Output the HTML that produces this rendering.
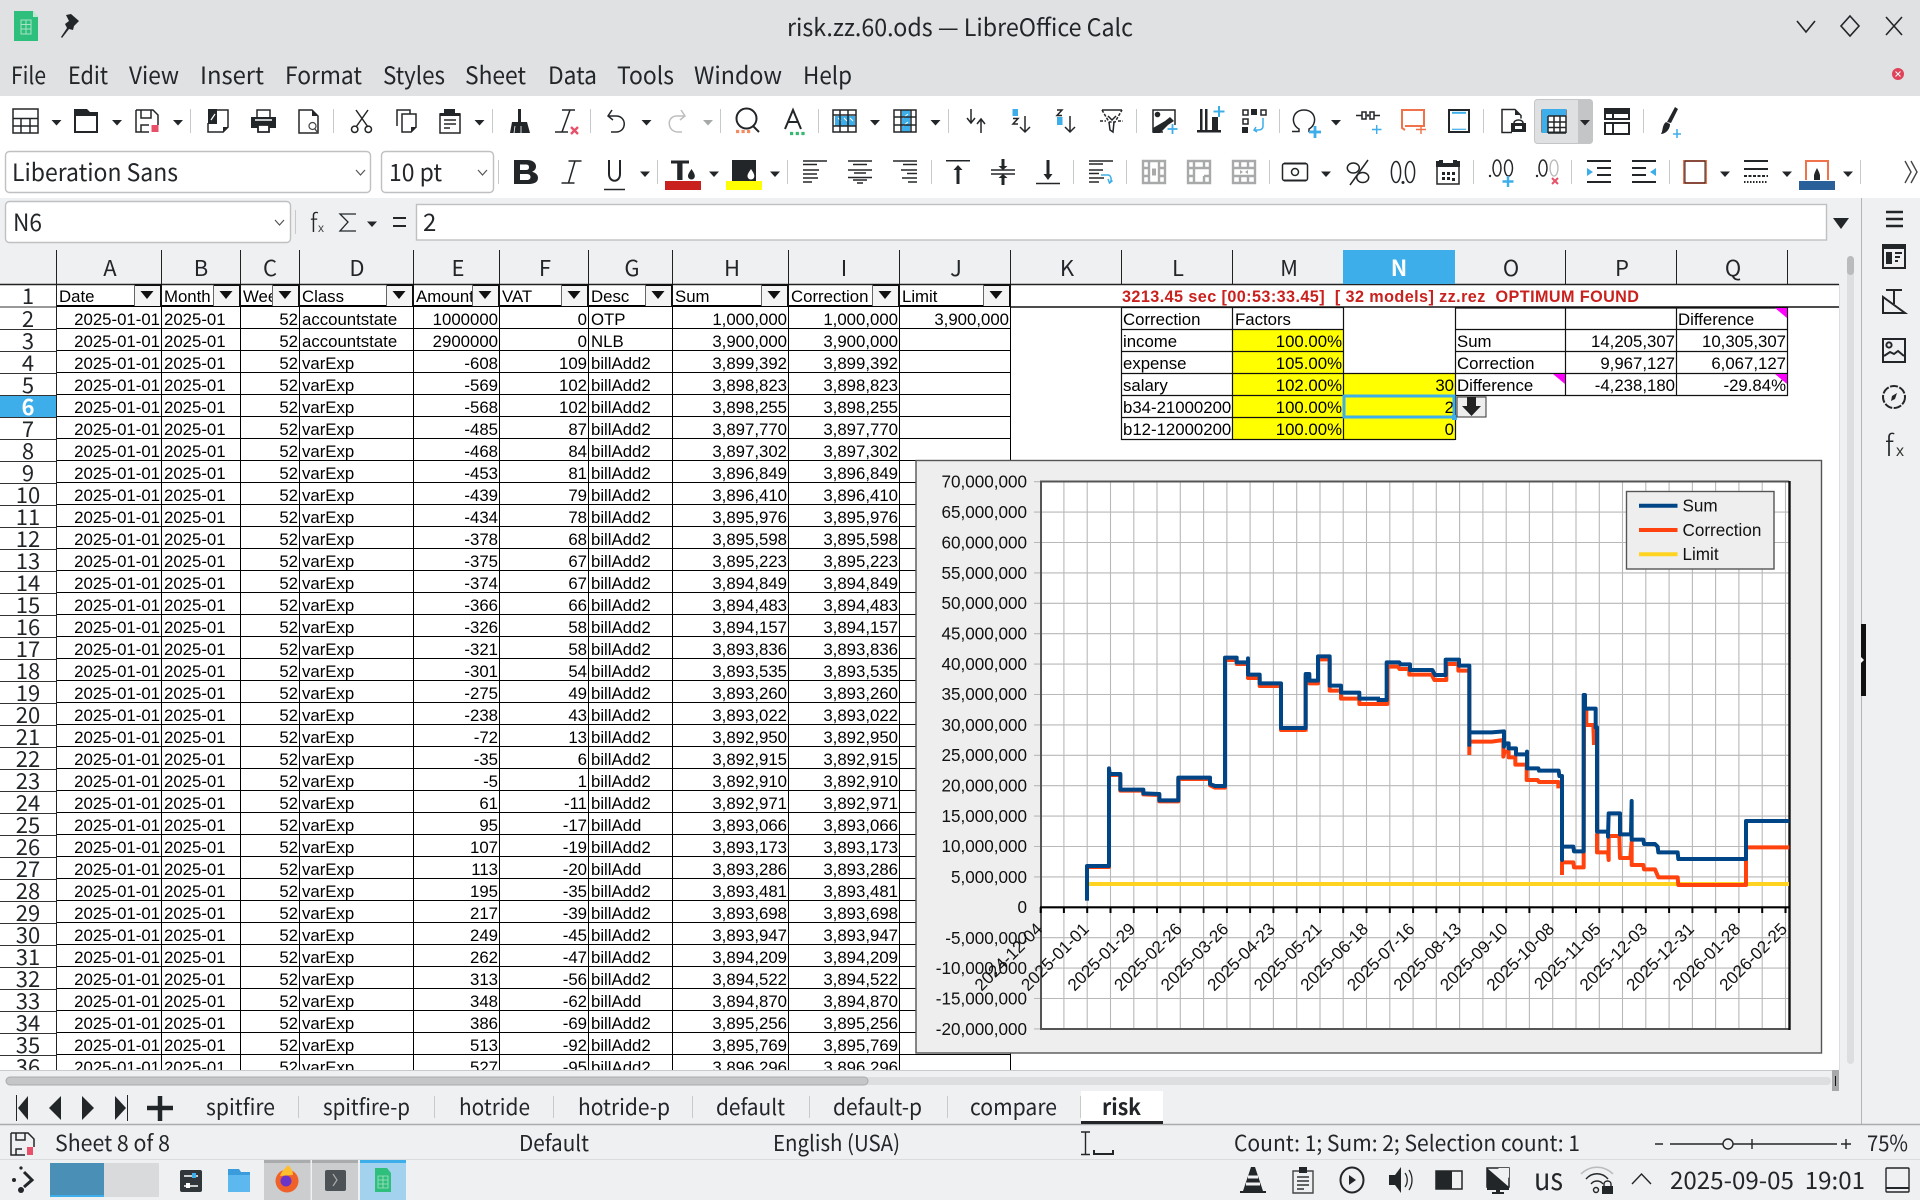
<!DOCTYPE html>
<html><head><meta charset="utf-8"><title>risk.zz.60.ods — LibreOffice Calc</title>
<style>
html,body{margin:0;padding:0;background:#eff0f2}
body{width:1920px;height:1200px;overflow:hidden;position:relative}
.b{position:absolute}
#grid{position:absolute;left:57px;top:284px;width:954px;height:786px;overflow:hidden;background:#fff}
table{border-collapse:separate;border-spacing:0;table-layout:fixed;width:954px;font:16.8px/17px "Liberation Sans",sans-serif;color:#000}
td{box-sizing:border-box;height:22px;padding:4px 1px 0 2px;border-right:1px solid #000;border-bottom:1px solid #000;white-space:nowrap;overflow:hidden}
tr:first-child td{height:23px;border-bottom:2px solid #000}
td:nth-child(1),td:nth-child(3),td:nth-child(5),td:nth-child(6),td:nth-child(8),td:nth-child(9),td:nth-child(10){text-align:right}
tr:first-child td{text-align:left}
svg{position:absolute;left:0;top:0}
.u{font-family:"Noto Sans CJK JP","Liberation Sans",sans-serif;fill:#232629;font-size:24px}
.h{font-family:"Noto Sans CJK JP","Liberation Sans",sans-serif;fill:#232629;font-size:22px;text-anchor:middle}
.c{font-family:"Liberation Sans",sans-serif;font-size:16.8px;fill:#000}
.e{text-anchor:end}
.t{font-family:"Liberation Sans",sans-serif;font-size:17.1px;fill:#111}
.s{fill:none;stroke:#232629;stroke-width:2}
.n{fill:none;stroke:#232629;stroke-width:1.5}
.f{fill:#232629}
.g{fill:none;stroke:#a8a9aa;stroke-width:2.4}
.sp{stroke:#c8c9ca;stroke-width:1}
</style></head><body>
<div class="b" style="left:0;top:0;width:1920px;height:96px;background:#dfe1e3"></div>
<div class="b" style="left:0;top:96px;width:1920px;height:102px;background:#fff"></div>
<div class="b" style="left:0;top:284px;width:1839px;height:786px;background:#fff"></div>
<div id="grid"><table>
<colgroup><col style="width:105px"><col style="width:79px"><col style="width:59px"><col style="width:114px"><col style="width:86px"><col style="width:89px"><col style="width:84px"><col style="width:116px"><col style="width:111px"><col style="width:111px"></colgroup>
<tr><td>Date<td>Month<td>Week<td>Class<td>Amount<td>VAT<td>Desc<td>Sum<td>Correction<td>Limit</tr>
<tr><td>2025-01-01<td>2025-01<td>52<td>accountstate<td>1000000<td>0<td>OTP<td>1,000,000<td>1,000,000<td>3,900,000</tr>
<tr><td>2025-01-01<td>2025-01<td>52<td>accountstate<td>2900000<td>0<td>NLB<td>3,900,000<td>3,900,000<td></tr>
<tr><td>2025-01-01<td>2025-01<td>52<td>varExp<td>-608<td>109<td>billAdd2<td>3,899,392<td>3,899,392<td></tr>
<tr><td>2025-01-01<td>2025-01<td>52<td>varExp<td>-569<td>102<td>billAdd2<td>3,898,823<td>3,898,823<td></tr>
<tr><td>2025-01-01<td>2025-01<td>52<td>varExp<td>-568<td>102<td>billAdd2<td>3,898,255<td>3,898,255<td></tr>
<tr><td>2025-01-01<td>2025-01<td>52<td>varExp<td>-485<td>87<td>billAdd2<td>3,897,770<td>3,897,770<td></tr>
<tr><td>2025-01-01<td>2025-01<td>52<td>varExp<td>-468<td>84<td>billAdd2<td>3,897,302<td>3,897,302<td></tr>
<tr><td>2025-01-01<td>2025-01<td>52<td>varExp<td>-453<td>81<td>billAdd2<td>3,896,849<td>3,896,849<td></tr>
<tr><td>2025-01-01<td>2025-01<td>52<td>varExp<td>-439<td>79<td>billAdd2<td>3,896,410<td>3,896,410<td></tr>
<tr><td>2025-01-01<td>2025-01<td>52<td>varExp<td>-434<td>78<td>billAdd2<td>3,895,976<td>3,895,976<td></tr>
<tr><td>2025-01-01<td>2025-01<td>52<td>varExp<td>-378<td>68<td>billAdd2<td>3,895,598<td>3,895,598<td></tr>
<tr><td>2025-01-01<td>2025-01<td>52<td>varExp<td>-375<td>67<td>billAdd2<td>3,895,223<td>3,895,223<td></tr>
<tr><td>2025-01-01<td>2025-01<td>52<td>varExp<td>-374<td>67<td>billAdd2<td>3,894,849<td>3,894,849<td></tr>
<tr><td>2025-01-01<td>2025-01<td>52<td>varExp<td>-366<td>66<td>billAdd2<td>3,894,483<td>3,894,483<td></tr>
<tr><td>2025-01-01<td>2025-01<td>52<td>varExp<td>-326<td>58<td>billAdd2<td>3,894,157<td>3,894,157<td></tr>
<tr><td>2025-01-01<td>2025-01<td>52<td>varExp<td>-321<td>58<td>billAdd2<td>3,893,836<td>3,893,836<td></tr>
<tr><td>2025-01-01<td>2025-01<td>52<td>varExp<td>-301<td>54<td>billAdd2<td>3,893,535<td>3,893,535<td></tr>
<tr><td>2025-01-01<td>2025-01<td>52<td>varExp<td>-275<td>49<td>billAdd2<td>3,893,260<td>3,893,260<td></tr>
<tr><td>2025-01-01<td>2025-01<td>52<td>varExp<td>-238<td>43<td>billAdd2<td>3,893,022<td>3,893,022<td></tr>
<tr><td>2025-01-01<td>2025-01<td>52<td>varExp<td>-72<td>13<td>billAdd2<td>3,892,950<td>3,892,950<td></tr>
<tr><td>2025-01-01<td>2025-01<td>52<td>varExp<td>-35<td>6<td>billAdd2<td>3,892,915<td>3,892,915<td></tr>
<tr><td>2025-01-01<td>2025-01<td>52<td>varExp<td>-5<td>1<td>billAdd2<td>3,892,910<td>3,892,910<td></tr>
<tr><td>2025-01-01<td>2025-01<td>52<td>varExp<td>61<td>-11<td>billAdd2<td>3,892,971<td>3,892,971<td></tr>
<tr><td>2025-01-01<td>2025-01<td>52<td>varExp<td>95<td>-17<td>billAdd<td>3,893,066<td>3,893,066<td></tr>
<tr><td>2025-01-01<td>2025-01<td>52<td>varExp<td>107<td>-19<td>billAdd2<td>3,893,173<td>3,893,173<td></tr>
<tr><td>2025-01-01<td>2025-01<td>52<td>varExp<td>113<td>-20<td>billAdd<td>3,893,286<td>3,893,286<td></tr>
<tr><td>2025-01-01<td>2025-01<td>52<td>varExp<td>195<td>-35<td>billAdd2<td>3,893,481<td>3,893,481<td></tr>
<tr><td>2025-01-01<td>2025-01<td>52<td>varExp<td>217<td>-39<td>billAdd2<td>3,893,698<td>3,893,698<td></tr>
<tr><td>2025-01-01<td>2025-01<td>52<td>varExp<td>249<td>-45<td>billAdd2<td>3,893,947<td>3,893,947<td></tr>
<tr><td>2025-01-01<td>2025-01<td>52<td>varExp<td>262<td>-47<td>billAdd2<td>3,894,209<td>3,894,209<td></tr>
<tr><td>2025-01-01<td>2025-01<td>52<td>varExp<td>313<td>-56<td>billAdd2<td>3,894,522<td>3,894,522<td></tr>
<tr><td>2025-01-01<td>2025-01<td>52<td>varExp<td>348<td>-62<td>billAdd<td>3,894,870<td>3,894,870<td></tr>
<tr><td>2025-01-01<td>2025-01<td>52<td>varExp<td>386<td>-69<td>billAdd2<td>3,895,256<td>3,895,256<td></tr>
<tr><td>2025-01-01<td>2025-01<td>52<td>varExp<td>513<td>-92<td>billAdd2<td>3,895,769<td>3,895,769<td></tr>
<tr><td>2025-01-01<td>2025-01<td>52<td>varExp<td>527<td>-95<td>billAdd2<td>3,896,296<td>3,896,296<td></tr>
</table></div>

<svg width="1920" height="1200" viewBox="0 0 1920 1200" xmlns="http://www.w3.org/2000/svg">
<defs>
<path id="arr" d="M-5-2.500h10l-5 5.500z" fill="#232629"/>
<path id="flt" d="M-6.500-4h13l-6.500 8z" fill="#111"/>
</defs>

<!-- title bar -->
<path d="M14 11h19l5 6v24H14z" fill="#2fbf7c"/><path d="M33 11l5 6h-5z" fill="#bfe9d3"/>
<path d="M21 20h10v14H21zM21 24.500h10M21 29h10M26 20v14" fill="none" stroke="#a7e3c4" stroke-width="1"/>
<path d="M66 15l5-1 8 7-5 5-1 4-4-1-7 9-1-1 6-9-2-4 4-3z" fill="#232629"/>
<text class="u" x="787" y="36" textLength="346" lengthAdjust="spacingAndGlyphs">risk.zz.60.ods — LibreOffice Calc</text>
<path d="M1797 21l9 11 9-11M1850 16l9 10-9 10-9-10zM1886 17l16 18M1902 17l-16 18" fill="none" stroke="#232629" stroke-width="1.600"/>

<!-- menu -->
<g class="m">
<text class="u" x="11" y="84" textLength="35" lengthAdjust="spacingAndGlyphs">File</text>
<text class="u" x="68" y="84" textLength="40" lengthAdjust="spacingAndGlyphs">Edit</text>
<text class="u" x="129" y="84" textLength="50" lengthAdjust="spacingAndGlyphs">View</text>
<text class="u" x="200" y="84" textLength="64" lengthAdjust="spacingAndGlyphs">Insert</text>
<text class="u" x="285" y="84" textLength="77" lengthAdjust="spacingAndGlyphs">Format</text>
<text class="u" x="383" y="84" textLength="62" lengthAdjust="spacingAndGlyphs">Styles</text>
<text class="u" x="465" y="84" textLength="61" lengthAdjust="spacingAndGlyphs">Sheet</text>
<text class="u" x="548" y="84" textLength="49" lengthAdjust="spacingAndGlyphs">Data</text>
<text class="u" x="617" y="84" textLength="57" lengthAdjust="spacingAndGlyphs">Tools</text>
<text class="u" x="694" y="84" textLength="88" lengthAdjust="spacingAndGlyphs">Window</text>
<text class="u" x="803" y="84" textLength="49" lengthAdjust="spacingAndGlyphs">Help</text>
</g>
<circle cx="1898" cy="74" r="6" fill="#e0425a"/><path d="M1895.500 71.500l5 5M1900.500 71.500l-5 5" stroke="#fff" stroke-width="1"/>

<!-- active toolbar button -->
<rect x="1534.500" y="99.500" width="58" height="44" rx="3" fill="#dfe0e1" stroke="#c4c5c6"/>
<rect x="1578" y="100" width="14" height="43" fill="#c4c5c6"/>

<!-- separators toolbar 1 -->
<path class="sp" d="M190.500 109v24M333.500 109v24M492.500 109v24M590.500 109v24M720.500 109v24M818.500 109v24M948.500 109v24M1136.500 109v24M1279.500 109v24M1483.500 109v24M1643.500 109v24"/>
<!-- separators toolbar 2 -->
<path class="sp" d="M498.500 160v24M657.500 160v24M787.500 160v24M931.500 160v24M1073.500 160v24M1126.500 160v24M1269.500 160v24M1473.500 160v24M1571.500 160v24M1669.500 160v24M1860.500 160v24"/>

<!-- toolbar 1 icons -->
<path class="n" stroke-width="1.800" d="M13 109h25v24H13zM13 118.500h25M13 126h25M21 118v15M30 118v15"/><use href="#arr" x="56.500" y="122.500"/>
<path class="f" d="M74 109h13l3 3h8v4H74z"/><path class="s" d="M75 115v17h22V115"/><use href="#arr" x="117" y="122.500"/>
<path class="n" stroke-width="1.700" d="M136 110h17l5 5v10M136 110v22h13M141 110v8h10v-8M141 132v-7h8"/><rect x="151.500" y="125" width="7" height="7" fill="#e8506a"/><use href="#arr" x="178" y="122.500"/>
<path class="n" stroke-width="1.700" d="M217 110h11v17l-5 5h-15v-9"/><path class="f" d="M229 127l-6 6v-6zM208 109h9v15h-9z"/><path d="M211 120l4-6" stroke="#fff" stroke-width="1.200"/>
<path class="n" stroke-width="1.800" d="M257 117v-7h13v7"/><path class="f" d="M251 117h25v11h-25z"/><path d="M255 120h17" stroke="#fff" stroke-width="1.400"/><path d="M258 125h11v7h-11z" fill="#fff" stroke="#232629" stroke-width="1.800"/>
<path class="n" stroke-width="1.500" d="M299 133v-23h13l6 6v17z"/><path class="f" d="M312 110l6 6h-6z"/><circle cx="312.500" cy="126" r="3.500" fill="#fff" stroke="#444" stroke-width="1.200"/><path d="M315 129l3 4" stroke="#444" stroke-width="1.400"/>
<path class="n" stroke-width="1.800" d="M356 110l12 17M368 110l-12 17"/><circle cx="354.700" cy="129.300" r="3.200" class="n"/><circle cx="368.300" cy="129.300" r="3.200" class="n"/>
<path class="n" stroke-width="1.700" d="M397 126v-16h13v4M402 114h14v13l-5 5h-9z"/><path class="f" d="M417 127l-6 6v-6z"/>
<path class="n" stroke-width="1.700" d="M440 114h20v19h-20z"/><path class="f" d="M444 109h11v4h5v3h-20v-3h4z"/><path class="n" stroke-width="1.300" d="M444 120h12M444 124h12M444 128h6"/><use href="#arr" x="479.500" y="122.500"/>
<path class="f" d="M518 109h3v13h-3zM512 122h15l3 11h-20z"/><path d="M515 126l-1 7M521 126v7" stroke="#fff" stroke-width=".8"/>
<path class="n" d="M562 110h13M570 110l-8 22M555 132h13"/><path d="M571 127l7 7M578 127l-7 7" stroke="#e8506a" stroke-width="2.400"/>
<path class="n" stroke="#333" d="M612 110l-4 6 5 4M608 116h8c11 0 11 16 0 16h-5"/><use href="#arr" x="646.500" y="122.500"/>
<path fill="none" stroke="#bdbebf" stroke-width="1.500" d="M681 110l4 6-5 4M685 116h-8c-11 0-10 16 1 16h4"/><use href="#arr" x="708" y="122.500" opacity=".4"/>
<circle cx="746.500" cy="118.500" r="10" class="s"/><path class="s" d="M753 126l6 6"/><path d="M736 131.500h16" stroke="#f5895f" stroke-width="3.200" stroke-dasharray="3.200 2.300"/>
<path class="s" d="M785 129l8-19 8 19M787.500 122h11"/><path d="M790 133.500h15" stroke="#35b86f" stroke-width="3.200" stroke-dasharray="3.200 2.500"/>
<rect x="835" y="116" width="20" height="10" fill="#3daee9"/><path d="M838 118l3 3M844 118l3 3M850 118l3 3" stroke="#fff"/><path class="n" stroke-width="2" d="M833 110h23v22h-23zM833 115h23M833 126h23M840 110v22M848 110v22"/><use href="#arr" x="875" y="122.500"/>
<rect x="902" y="110" width="8" height="22" fill="#3daee9"/><path d="M903 118l5-4M903 126l5-4" stroke="#fff"/><path class="n" stroke-width="2" d="M894 110h22v22h-22zM894 117h22M894 125h22M901 110v22M911 110v22"/><use href="#arr" x="935.500" y="122.500"/>
<path class="n" stroke-width="1.500" d="M971 109v14M967 118l4 5 4-5M981 133v-14M977 124l4-5 4 5"/>
<rect x="1012.500" y="109" width="5.500" height="7" fill="#3daee9"/><path class="n" stroke-width="1.800" d="M1013 118.500h5l-5 5.500h5"/><path class="n" stroke-width="1.500" d="M1025 116v16M1020 127l5 5 5-5"/>
<path class="n" stroke-width="1.800" d="M1057 110h5l-5 5.500h5"/><rect x="1057" y="117" width="5.500" height="8" fill="#3daee9"/><path class="n" stroke-width="1.500" d="M1070 116v16M1065 127l5 5 5-5"/>
<path class="n" stroke-width="2" d="M1102 110h20"/><path class="n" stroke-width="1.500" stroke-dasharray="3 1.500" d="M1102 110l7 12h6l7-12M1100 121h6M1118 121h5"/><path class="n" stroke-width="1.500" d="M1108 116l4 4 4-4M1109 122l1 8 3 2 1-10"/>
<path class="n" stroke-width="2" d="M1175 125V110h-22v22h10"/><path class="f" d="M1153 133v-5l12-7 5-4 4 4-6 4-8 8z"/><circle cx="1157.500" cy="114.500" r="2.800" class="f"/><path d="M1172.500 124v10M1167.500 129h10" stroke="#3daee9" stroke-width="1.800"/>
<path class="f" d="M1200 109h2.500v22H1200zM1205 109h2.500v22H1205zM1212 117h6v14h-6zM1197 130h24v2.500h-24z"/><path d="M1219 106v11M1213.500 111.500h11" stroke="#3daee9" stroke-width="2"/>
<path class="n" stroke-width="1.800" d="M1243 110h5v5h-5zM1261 110h5v5h-5zM1243 119h5v5h-5z"/><path class="f" d="M1251 109h6v6h-6zM1242 127h6v6h-6z"/><path d="M1263 118v8c0 3-2 4-5 4h-4M1256 127l-2 3 3 2" fill="none" stroke="#3daee9" stroke-width="1.500"/>
<path class="n" stroke-width="2.500" d="M1292 131.500h7v-2.500c-9-5-7-19 5-19s14 14 5 19v2.500h7"/><path d="M1315 126v12M1309 132h12" stroke="#3daee9" stroke-width="2.800"/><use href="#arr" x="1336" y="122.500"/>
<path class="n" stroke-width="2" d="M1356 115.500h6M1374 115.500h6M1362 112h4v7h-4zM1370 112h4v7h-4z"/><circle cx="1368" cy="115.500" r="1.200" class="f"/><path d="M1376.700 125v9M1372 129.500h9.500" stroke="#3daee9" stroke-width="1.400"/>
<path fill="none" stroke="#f0724a" stroke-width="2" d="M1402 125v-15h22v16h-19M1402 125v3l3 2"/><path d="M1421 125v9M1416 129.500h10" stroke="#f0724a" stroke-width="1.400"/>
<rect x="1449" y="110" width="20" height="22" fill="none" stroke="#232629" stroke-width="2"/><path d="M1452 112.800h14" stroke="#3daee9" stroke-width="2"/><path d="M1452 129.300h14" stroke="#3daee9" stroke-width="1.200"/>
<path class="n" stroke-width="1.700" d="M1512 132.500h-10v-23h13l6 6v3"/><path class="f" d="M1515 109l6 6h-6zM1511 123h15v9h-15z"/><path class="n" d="M1514 123c0-4 9-4 9 0"/><rect x="1515" y="126" width="7" height="3" fill="#fff"/>
<rect x="1542" y="110" width="24" height="22" fill="#fff" stroke="#232629" stroke-width="1"/><path d="M1542 109h24v7h-24zM1542 109h6v24h-6z" fill="#3daee9"/><path class="n" d="M1548 116h18M1548 122h18M1548 127.500h18M1548 116v17M1554 116v17M1560 116v17M1566 116v17M1548 133h18"/><use href="#arr" x="1585" y="122.500"/>
<g transform="translate(1617,121)"><path class="f" d="M-12-13h24v6h-24z"/><path class="s" d="M-12-12h24v10h-24zM-12 2h24v11h-24zM-4-7v5M-4 2v11"/></g>
<g transform="translate(1670,121)"><path class="f" d="M5-14l3 2-7 14-4-1zM-4 1l4 2c0 6-5 10-9 10 2-3 1-9 5-12z"/><path d="M7 8v9M3 13h8" stroke="#3daee9" stroke-width="1.500"/></g>

<!-- combos -->
<rect x="5.500" y="151.500" width="365" height="41" rx="4" fill="#fff" stroke="#bfc0c1" stroke-width="1.400"/>
<rect x="381.500" y="151.500" width="112" height="41" rx="4" fill="#fff" stroke="#bfc0c1" stroke-width="1.400"/>
<text class="u" x="12" y="181" textLength="166" lengthAdjust="spacingAndGlyphs">Liberation Sans</text>
<text class="u" x="389" y="181" textLength="53" lengthAdjust="spacingAndGlyphs">10 pt</text>
<path d="M356 170l4.500 5 4.500-5M478 170l4.500 5 4.500-5" fill="none" stroke="#555" stroke-width="1.200"/>

<!-- toolbar 2 icons -->
<path class="f" fill-rule="evenodd" d="M514 160h13c6 0 9 3 9 6.500 0 3-2 4.500-4 5.300 3 .7 6 2.700 6 6 0 4-3 6.200-9 6.200h-15zM520 164.500v5.500h5.500c2.500 0 3.500-1 3.500-2.800s-1-2.700-3.500-2.700zM520 174v6h6.500c2.500 0 4-1 4-3s-1.500-3-4-3z"/>
<path class="n" d="M568.500 161h13M575 161l-6.500 22M561.500 183h13"/>
<path class="s" stroke-width="4" d="M609 160v14c0 9 11 9 11 0v-14"/><path class="n" stroke-width="1" d="M604 189.500h21"/><use href="#arr" x="645" y="174"/>
<path class="f" d="M671 160.500h18v3h-6.500V180h-5.300v-16.500H671zM691.500 169c2 3 3.300 5 3.300 7 0 2-1.300 3.500-3.300 3.500S688 178 688 176c0-2 1.500-4 3.500-7z"/><rect x="665" y="181" width="36" height="9" fill="#c9211e"/><use href="#arr" x="714" y="174"/>
<rect x="732" y="160" width="24" height="21" fill="#232629"/><path fill="#fff" d="M751 169c2 3 3.300 5 3.300 7 0 2-1.300 3.500-3.300 3.500s-3.500-1.500-3.500-3.500c0-2 1.500-4 3.500-7z"/><rect x="726" y="181" width="36" height="9" fill="#ff0"/><use href="#arr" x="775" y="174"/>
<path class="n" stroke-width="1.800" d="M803 161h24M803 164.500h14M803 170h16M803 174h14M803 178h15M803 182h9"/>
<path class="n" stroke-width="1.800" d="M848 161h24M853 164.500h14M848 170h24M854 173h12M848 177.500h24M853 180h14M857 183h6"/>
<path class="n" stroke-width="1.800" d="M893 161h24M903 164.500h14M901 170h16M907 173.500h10M902 178h15M908 182h9"/>
<path class="n" stroke-width="1.600" d="M946 160.800h24"/><path class="f" d="M958 165l4.500 5h-3v14h-3v-14h-3z"/>
<path class="n" stroke-width="1.600" d="M991 170h24M991 174h24"/><path class="f" d="M1001.500 159h3v7h3l-4.500 4-4.500-4h3zM1001.500 185h3v-7h3l-4.500-4-4.500 4h3z"/>
<path class="n" stroke-width="1.600" d="M1036 183.500h24"/><path class="f" d="M1046.500 160h3v14h3l-4.500 6-4.500-6h3z"/>
<path class="n" stroke-width="1.800" d="M1089 161h24M1089 164h14M1089 170h14M1089 173.500h10M1089 178h15M1089 182h10"/><path d="M1101 175h7c4 0 4 8 1 8M1108 179l1.500 4 3-2.500" fill="none" stroke="#3daee9" stroke-width="1.500"/>
<path class="g" d="M1143 161h22v22h-22zM1143 168h6M1159 168h6M1143 176h6M1159 176h6M1149 161v22M1159 161v22"/><path d="M1152 168.500h4v7h-4z" fill="#a8a9aa"/>
<path class="g" d="M1188 161h22v22h-22zM1188 168h22M1188 176h6M1204 176h6M1194 161v7M1204 161v7M1194 168v15M1204 176v7"/>
<path class="g" d="M1233 161h22v22h-22zM1233 168h22M1233 176h22M1240 161v7M1248 161v7M1240 176v7M1248 176v7"/><path d="M1240 170l3 2-3 2zM1248 170l-3 2 3 2z" fill="#a8a9aa"/>
<rect x="1282.500" y="163.500" width="25" height="17" rx="2" class="n"/><path class="s" stroke-width="1" d="M1284 163.500h22M1284 180.500h22"/><circle cx="1295" cy="172" r="3.500" class="n"/><use href="#arr" x="1326" y="174"/>
<path class="n" stroke-width="1.800" d="M1368 160l-18 25"/><ellipse cx="1353.300" cy="168" rx="6" ry="5" class="n" stroke-width="1.800"/><ellipse cx="1362.700" cy="177.500" rx="6" ry="5" class="n" stroke-width="1.800"/>
<ellipse cx="1396" cy="172" rx="4.600" ry="10.500" class="n"/><ellipse cx="1410" cy="172" rx="4.600" ry="10.500" class="n"/><circle cx="1403" cy="182.500" r="1.500" class="f"/>
<path class="n" stroke-width="1.800" d="M1437 165h22v19h-22z"/><path class="f" d="M1436 161h3v-1h4v3h10v-3h4v1h3v6h-24zM1442 172h3v3h-3zM1447 172h3v3h-3zM1452 172h3v3h-3zM1442 177h3v3h-3zM1447 177h3v3h-3zM1452 178h3v3h-3z"/>
<circle cx="1490" cy="176" r="1.200" class="f"/><ellipse cx="1497" cy="168" rx="4" ry="8" class="n" stroke-width="1.300"/><ellipse cx="1508.500" cy="168" rx="4" ry="8" class="n" stroke-width="1.300"/><path d="M1508 176v11M1502.500 181.500h11" stroke="#3daee9" stroke-width="2.400"/>
<circle cx="1537" cy="176" r="1.200" class="f"/><ellipse cx="1543" cy="168" rx="4" ry="8" class="n" stroke-width="1.300"/><ellipse cx="1554" cy="168" rx="4" ry="8" fill="none" stroke="#b5b6b7" stroke-width="1.300"/><path d="M1552 178l6 6M1558 178l-6 6" stroke="#e8506a" stroke-width="2"/>
<g transform="translate(1599,172)"><path class="s" stroke-width="2.400" d="M-12-11h24M-2-4H12M-2 3H12M-12 10h24"/><path d="M-12-4l6 4-6 4z" fill="#3daee9"/></g>
<g transform="translate(1644,172)"><path class="s" stroke-width="2.400" d="M-12-11h24M-12-4H2M-12 3H2M-12 10h24"/><path d="M12-4L6 0l6 4z" fill="#3daee9"/></g>
<rect x="1684" y="161" width="22" height="22" fill="none" stroke="#f0724a" stroke-width="2"/><path d="M1685 161h20v22h-20z" fill="none" stroke="#232629" stroke-width="1"/><use href="#arr" x="1725" y="174"/>
<g transform="translate(1756,172)"><path class="s" stroke-width="3" d="M-12-11h24M-12-3h24"/><path class="s" stroke-dasharray="3 1.500" d="M-12 4h24"/><path class="s" stroke-width="1.500" stroke-dasharray="1.500 1.500" d="M-12 10h24"/></g><use href="#arr" x="1787" y="174"/>
<g transform="translate(1817,172)"><path fill="none" stroke="#f0724a" stroke-width="2" d="M-11 8v-19h22V8"/><path class="f" d="M0-4c2 4 3 6 3 8H-3c0-2 1-4 3-8zM-3 3h6v5h-6z"/><rect x="-18" y="9" width="36" height="9" fill="#2a6099"/></g><use href="#arr" x="1848" y="174"/>
<path d="M1905 161l6 11-6 11M1911 161l6 11-6 11" fill="none" stroke="#444" stroke-width="1.400"/>

<!-- formula bar -->
<rect x="5.500" y="201.500" width="285" height="41" rx="4" fill="#fff" stroke="#bfc0c1" stroke-width="1.400"/>
<text class="u" x="13" y="231" textLength="29" lengthAdjust="spacingAndGlyphs">N6</text>
<path d="M275 220l4.500 5 4.500-5" fill="none" stroke="#555" stroke-width="1.200"/>
<path class="sp" d="M295.500 210v24"/>
<text x="310" y="232" font-family="Noto Sans CJK JP,sans-serif" font-size="25" font-weight="300" fill="#232629">f</text><text x="318" y="232" font-family="Liberation Sans" font-size="12" fill="#444">x</text>
<path d="M356 214h-16l8 8-8 9h16" fill="none" stroke="#232629" stroke-width="1.300"/><use href="#arr" x="372" y="224"/>
<path d="M393 218h13M393 226h13" stroke="#232629" stroke-width="2"/>
<rect x="416.500" y="204.500" width="1410" height="35.500" fill="#fff" stroke="#bfc0c1" stroke-width="1.400"/>
<text class="u" x="423" y="231">2</text>
<path d="M1833 218h16l-8 11z" fill="#232629"/>

<!-- sidebar -->
<path d="M1861.500 198v926" stroke="#b5b6b7" stroke-width="1"/>
<path d="M1886 212h17M1886 219h17M1886 226h17" stroke="#232629" stroke-width="2.400"/>
<g transform="translate(1894,256)"><path class="s" d="M-11-11h22v23h-22z"/><path class="f" d="M-11-12h22v5h-22zM-8-4h6v12h-6z"/><path class="s" stroke-width="1.600" d="M1-3h7M1 1h5M1 5h3"/></g>
<g transform="translate(1894,302)"><path class="s" stroke-width="2.600" d="M-8-12H8M0-12V2"/><path class="s" d="M-11-5v16h22z"/></g>
<g transform="translate(1894,350)"><path class="s" d="M-11-11h22v23h-22z"/><circle cx="-5" cy="-5" r="2.600" class="s" stroke-width="1.400"/><path class="s" stroke-width="1.400" d="M-10 6l6-4 4 2 4-3 6 5"/></g>
<g transform="translate(1894,397)"><circle r="11" class="s" stroke-dasharray="8 1.500"/><path class="f" d="M3-4L1 2l-4 2 1-5z"/></g>
<text x="1885" y="456" font-family="Noto Sans CJK JP,sans-serif" font-size="29" font-weight="300" fill="#232629">f</text><text x="1896" y="456" font-family="Liberation Sans" font-size="16" fill="#333">x</text>
<rect x="1859" y="624" width="7" height="72" fill="#111"/><path d="M1861 657l3 3-3 3z" fill="#fff"/>

<!-- column header -->
<path d="M0 284.500h1839" stroke="#222" stroke-width="1.400"/>
<rect x="1343" y="250" width="112" height="34" fill="#3daee9"/>
<path d="M56.500 250V1070M161.500 250v34M240.500 250v34M299.500 250v34M413.500 250v34M499.500 250v34M588.500 250v34M672.500 250v34M788.500 250v34M899.500 250v34M1010.500 250v34M1121.500 250v34M1232.500 250v34M1565.500 250v34M1676.500 250v34M1787.500 250v34" stroke="#222" stroke-width="1"/>
<g class="colh">
<text class="h" x="110" y="276">A</text><text class="h" x="201" y="276">B</text><text class="h" x="270" y="276">C</text><text class="h" x="357" y="276">D</text><text class="h" x="458" y="276">E</text><text class="h" x="545" y="276">F</text><text class="h" x="632" y="276">G</text><text class="h" x="732" y="276">H</text><text class="h" x="844" y="276">I</text><text class="h" x="956" y="276">J</text><text class="h" x="1067" y="276">K</text><text class="h" x="1178" y="276">L</text><text class="h" x="1289" y="276">M</text><text class="h" x="1399" y="276" style="fill:#fff;font-weight:bold">N</text><text class="h" x="1511" y="276">O</text><text class="h" x="1622" y="276">P</text><text class="h" x="1733" y="276">Q</text>
</g>
<path d="M1010 307h829" stroke="#111" stroke-width="1.600"/>

<!-- row header -->
<rect x="0" y="395" width="56" height="22" fill="#3daee9"/>
<path d="M0 307h56M0 329.500h56M0 351.500h56M0 373.500h56M0 395.500h56M0 417.500h56M0 439.500h56M0 461.500h56M0 483.500h56M0 505.500h56M0 527.500h56M0 549.500h56M0 571.500h56M0 593.500h56M0 615.500h56M0 637.500h56M0 659.500h56M0 681.500h56M0 703.500h56M0 725.500h56M0 747.500h56M0 769.500h56M0 791.500h56M0 813.500h56M0 835.500h56M0 857.500h56M0 879.500h56M0 901.500h56M0 923.500h56M0 945.500h56M0 967.500h56M0 989.500h56M0 1011.500h56M0 1033.500h56M0 1055.500h56" stroke="#333" stroke-width="1"/>
<g>
<text class="h" x="28" y="304">1</text><text class="h" x="28" y="327">2</text><text class="h" x="28" y="349">3</text><text class="h" x="28" y="371">4</text><text class="h" x="28" y="393">5</text><text class="h" x="28" y="415" style="fill:#fff;font-weight:bold">6</text><text class="h" x="28" y="437">7</text><text class="h" x="28" y="459">8</text><text class="h" x="28" y="481">9</text><text class="h" x="28" y="503">10</text><text class="h" x="28" y="525">11</text><text class="h" x="28" y="547">12</text><text class="h" x="28" y="569">13</text><text class="h" x="28" y="591">14</text><text class="h" x="28" y="613">15</text><text class="h" x="28" y="635">16</text><text class="h" x="28" y="657">17</text><text class="h" x="28" y="679">18</text><text class="h" x="28" y="701">19</text><text class="h" x="28" y="723">20</text><text class="h" x="28" y="745">21</text><text class="h" x="28" y="767">22</text><text class="h" x="28" y="789">23</text><text class="h" x="28" y="811">24</text><text class="h" x="28" y="833">25</text><text class="h" x="28" y="855">26</text><text class="h" x="28" y="877">27</text><text class="h" x="28" y="899">28</text><text class="h" x="28" y="921">29</text><text class="h" x="28" y="943">30</text><text class="h" x="28" y="965">31</text><text class="h" x="28" y="987">32</text><text class="h" x="28" y="1009">33</text><text class="h" x="28" y="1031">34</text><text class="h" x="28" y="1053">35</text><text class="h" x="28" y="1075">36</text>
</g>

<!-- autofilter buttons -->
<g id="af">
<g transform="translate(161,284)"><path d="M-26 1h26v21h-26z" fill="#f4f4f4"/><path d="M-26 1H0V22" fill="none" stroke="#111" stroke-width="2"/><path d="M-26.500 1v21" stroke="#666"/><use href="#flt" x="-14" y="11"/></g>
<g transform="translate(240,284)"><path d="M-26 1h26v21h-26z" fill="#f4f4f4"/><path d="M-26 1H0V22" fill="none" stroke="#111" stroke-width="2"/><path d="M-26.500 1v21" stroke="#666"/><use href="#flt" x="-14" y="11"/></g>
<g transform="translate(299,284)"><path d="M-26 1h26v21h-26z" fill="#f4f4f4"/><path d="M-26 1H0V22" fill="none" stroke="#111" stroke-width="2"/><path d="M-26.500 1v21" stroke="#666"/><use href="#flt" x="-14" y="11"/></g>
<g transform="translate(413,284)"><path d="M-26 1h26v21h-26z" fill="#f4f4f4"/><path d="M-26 1H0V22" fill="none" stroke="#111" stroke-width="2"/><path d="M-26.500 1v21" stroke="#666"/><use href="#flt" x="-14" y="11"/></g>
<g transform="translate(499,284)"><path d="M-26 1h26v21h-26z" fill="#f4f4f4"/><path d="M-26 1H0V22" fill="none" stroke="#111" stroke-width="2"/><path d="M-26.500 1v21" stroke="#666"/><use href="#flt" x="-14" y="11"/></g>
<g transform="translate(588,284)"><path d="M-26 1h26v21h-26z" fill="#f4f4f4"/><path d="M-26 1H0V22" fill="none" stroke="#111" stroke-width="2"/><path d="M-26.500 1v21" stroke="#666"/><use href="#flt" x="-14" y="11"/></g>
<g transform="translate(672,284)"><path d="M-26 1h26v21h-26z" fill="#f4f4f4"/><path d="M-26 1H0V22" fill="none" stroke="#111" stroke-width="2"/><path d="M-26.500 1v21" stroke="#666"/><use href="#flt" x="-14" y="11"/></g>
<g transform="translate(788,284)"><path d="M-26 1h26v21h-26z" fill="#f4f4f4"/><path d="M-26 1H0V22" fill="none" stroke="#111" stroke-width="2"/><path d="M-26.500 1v21" stroke="#666"/><use href="#flt" x="-14" y="11"/></g>
<g transform="translate(899,284)"><path d="M-26 1h26v21h-26z" fill="#f4f4f4"/><path d="M-26 1H0V22" fill="none" stroke="#111" stroke-width="2"/><path d="M-26.500 1v21" stroke="#666"/><use href="#flt" x="-14" y="11"/></g>
<g transform="translate(1010,284)"><path d="M-26 1h26v21h-26z" fill="#f4f4f4"/><path d="M-26 1H0V22" fill="none" stroke="#111" stroke-width="2"/><path d="M-26.500 1v21" stroke="#666"/><use href="#flt" x="-14" y="11"/></g>
</g>

<!-- red status text -->
<text x="1122" y="302" font-family="Liberation Sans" font-weight="bold" font-size="16.200" fill="#c9211e" textLength="517" xml:space="preserve" style="white-space:pre">3213.45 sec [00:53:33.45]  [ 32 models] zz.rez  OPTIMUM FOUND</text>

<!-- side tables -->
<rect x="1233" y="329" width="110" height="110" fill="#ff0"/>
<rect x="1344" y="373" width="111" height="66" fill="#ff0"/>
<path d="M1121 307.500h223M1121 329.500h222M1121 351.500h222M1121 373.500h334M1121 395.500h334M1121 417.500h334M1121 439.500h334M1455 308h333M1455 329.500h333M1455 351.500h333M1455 373.500h333M1455 395.500h333M1121.500 307v133M1232.500 307v133M1343.500 307v133M1455.500 307v133M1565.500 307v89M1676.500 307v89M1787.500 307v89" fill="none" stroke="#111" stroke-width="1.200"/>
<g class="tbl">
<text class="c" x="1123" y="325">Correction</text><text class="c" x="1235" y="325">Factors</text>
<text class="c" x="1123" y="347">income</text><text class="c e" x="1342" y="347">100.00%</text>
<text class="c" x="1123" y="369">expense</text><text class="c e" x="1342" y="369">105.00%</text>
<text class="c" x="1123" y="391">salary</text><text class="c e" x="1342" y="391">102.00%</text><text class="c e" x="1454" y="391">30</text>
<text class="c" x="1123" y="413">b34-21000200</text><text class="c e" x="1342" y="413">100.00%</text><text class="c e" x="1454" y="413">2</text>
<text class="c" x="1123" y="435">b12-12000200</text><text class="c e" x="1342" y="435">100.00%</text><text class="c e" x="1454" y="435">0</text>
<text class="c" x="1678" y="325">Difference</text>
<text class="c" x="1457" y="347">Sum</text><text class="c e" x="1675" y="347">14,205,307</text><text class="c e" x="1786" y="347">10,305,307</text>
<text class="c" x="1457" y="369">Correction</text><text class="c e" x="1675" y="369">9,967,127</text><text class="c e" x="1786" y="369">6,067,127</text>
<text class="c" x="1457" y="391">Difference</text><text class="c e" x="1675" y="391">-4,238,180</text><text class="c e" x="1786" y="391">-29.84%</text>
</g>
<path d="M1775 308h12v10zM1553 374h12v10zM1775 374h12v10z" fill="#f0f"/>
<rect x="1344" y="396" width="110" height="21" fill="none" stroke="#3daee9" stroke-width="3"/>
<rect x="1452" y="415" width="5" height="5" fill="#3daee9"/>
<rect x="1457" y="397" width="29" height="20" fill="#eee" stroke="#333" stroke-width="1"/>
<path d="M1467 397h9v9h5l-9.500 10-9.500-10h5z" fill="#222"/>

<!-- chart -->
<rect x="916" y="460.500" width="905.500" height="592.500" fill="#eee" stroke="#555" stroke-width="1.400"/>
<rect x="1041" y="482" width="748" height="547" fill="#fff"/>
<g stroke="#b8b8b8" stroke-width="1.100">
<path d="M1034 481.700h755M1034 512.100h755M1034 542.500h755M1034 572.900h755M1034 603.300h755M1034 633.700h755M1034 664.100h755M1034 694.500h755M1034 724.900h755M1034 755.300h755M1034 785.700h755M1034 816.100h755M1034 846.500h755M1034 876.900h755M1034 937.700h755M1034 968.100h755M1034 998.500h755M1034 1028.900h755"/>
<path d="M1063.900 482v547M1087.200 482v547M1110.500 482v547M1133.800 482v547M1157 482v547M1180.300 482v547M1203.600 482v547M1226.900 482v547M1250.100 482v547M1273.400 482v547M1296.700 482v547M1320 482v547M1343.200 482v547M1366.500 482v547M1389.800 482v547M1413.100 482v547M1436.300 482v547M1459.600 482v547M1482.900 482v547M1506.200 482v547M1529.400 482v547M1552.700 482v547M1576 482v547M1599.300 482v547M1622.500 482v547M1645.800 482v547M1669.100 482v547M1692.400 482v547M1715.600 482v547M1738.900 482v547M1762.200 482v547M1785.500 482v547"/>
</g>
<path d="M1041 482V1029M1040 481.500h749M1040 1029h750" fill="none" stroke="#555" stroke-width="2"/>
<path d="M1789.500 481v549" stroke="#111" stroke-width="2.400"/>
<path d="M1040 907.300h750" stroke="#000" stroke-width="2.200"/>
<path d="M1040.700 907v6M1063.900 907v6M1087.200 907v6M1110.500 907v6M1133.800 907v6M1157 907v6M1180.300 907v6M1203.600 907v6M1226.900 907v6M1250.100 907v6M1273.400 907v6M1296.700 907v6M1320 907v6M1343.200 907v6M1366.500 907v6M1389.800 907v6M1413.100 907v6M1436.300 907v6M1459.600 907v6M1482.900 907v6M1506.200 907v6M1529.400 907v6M1552.700 907v6M1576 907v6M1599.300 907v6M1622.500 907v6M1645.800 907v6M1669.100 907v6M1692.400 907v6M1715.600 907v6M1738.900 907v6M1762.200 907v6M1785.500 907v6" stroke="#000" stroke-width="2"/>

<path d="M1089 884H1789" stroke="#ffd320" stroke-width="4"/>
<g fill="none" stroke="#ff420e" stroke-width="12" stroke-linejoin="round">
<g transform="translate(900,640) scale(.33333)"><path d="M561 782V681H627V388L629 405H661V452H730V463L778 465V484H835V417H930V436L945 443H975V60H1010V72H1044V114H1079V138H1143V270H1217V275M1217 275V110H1228V130H1254V58H1289V152H1323V176H1378V192H1440"/></g>
<g transform="translate(1380,640) scale(.33333)"><path d="M-10 192H22V80H55L58 87H88V104H155L163 120H199V72H235V92H268V345M268 305H335L370 300V350L374 335H386V352H406V374H440V420H473L477 426H535V445M546 705V667H580L582 682H611V640L612 210H619V255H640L642 315M651 580V637H684L686 660V588H718L720 654H751L755 605V675H790L792 688H825L835 712H893L895 735H1098V622H1228"/></g>
</g>
<g fill="none" stroke="#004586" stroke-width="12" stroke-linejoin="round">
<g transform="translate(900,640) scale(.33333)"><path d="M561 782V678H627V385L629 402H661V449H730V460L778 462V481H835V413H930V432L945 438H975V53H1010V67H1044V55V104H1079V130H1143V264H1217V102H1228V122H1254V49H1289V137H1323V158H1378V176H1440"/></g>
<g transform="translate(1380,640) scale(.33333)"><path d="M-10 180H20V67H58L62 73H90V90H157L165 105H197V59H237V77H268V320M268 277H335L372 274V320L376 310H386V325H408V343H441V335V385H475L477 392H536L538 408H546V660V620H580L582 634H611V165H615V206H647V262H651V575H684V590L686 520H720V583H753L755 483V599H790L792 612H825L833 620L835 637H893L895 657H1098V543H1228"/></g>
</g>

<g class="t e" text-anchor="end">
<text class="t" text-anchor="end" x="1027" y="487.500">70,000,000</text>
<text class="t" text-anchor="end" x="1027" y="518">65,000,000</text>
<text class="t" text-anchor="end" x="1027" y="548.500">60,000,000</text>
<text class="t" text-anchor="end" x="1027" y="579">55,000,000</text>
<text class="t" text-anchor="end" x="1027" y="609">50,000,000</text>
<text class="t" text-anchor="end" x="1027" y="639.500">45,000,000</text>
<text class="t" text-anchor="end" x="1027" y="670">40,000,000</text>
<text class="t" text-anchor="end" x="1027" y="700">35,000,000</text>
<text class="t" text-anchor="end" x="1027" y="731">30,000,000</text>
<text class="t" text-anchor="end" x="1027" y="761">25,000,000</text>
<text class="t" text-anchor="end" x="1027" y="791.500">20,000,000</text>
<text class="t" text-anchor="end" x="1027" y="822">15,000,000</text>
<text class="t" text-anchor="end" x="1027" y="852">10,000,000</text>
<text class="t" text-anchor="end" x="1027" y="883">5,000,000</text>
<text class="t" text-anchor="end" x="1027" y="913">0</text>
<text class="t" text-anchor="end" x="1027" y="944">-5,000,000</text>
<text class="t" text-anchor="end" x="1027" y="974">-10,000,000</text>
<text class="t" text-anchor="end" x="1027" y="1004.500">-15,000,000</text>
<text class="t" text-anchor="end" x="1027" y="1035">-20,000,000</text>
</g>
<g text-anchor="end">
<text class="t" text-anchor="end" transform="translate(1043.500,930) rotate(-45)">2024-12-04</text>
<text class="t" text-anchor="end" transform="translate(1090,930) rotate(-45)">2025-01-01</text>
<text class="t" text-anchor="end" transform="translate(1136.500,930) rotate(-45)">2025-01-29</text>
<text class="t" text-anchor="end" transform="translate(1183,930) rotate(-45)">2025-02-26</text>
<text class="t" text-anchor="end" transform="translate(1229.600,930) rotate(-45)">2025-03-26</text>
<text class="t" text-anchor="end" transform="translate(1276.100,930) rotate(-45)">2025-04-23</text>
<text class="t" text-anchor="end" transform="translate(1322.700,930) rotate(-45)">2025-05-21</text>
<text class="t" text-anchor="end" transform="translate(1369.200,930) rotate(-45)">2025-06-18</text>
<text class="t" text-anchor="end" transform="translate(1415.800,930) rotate(-45)">2025-07-16</text>
<text class="t" text-anchor="end" transform="translate(1462.300,930) rotate(-45)">2025-08-13</text>
<text class="t" text-anchor="end" transform="translate(1508.900,930) rotate(-45)">2025-09-10</text>
<text class="t" text-anchor="end" transform="translate(1555.400,930) rotate(-45)">2025-10-08</text>
<text class="t" text-anchor="end" transform="translate(1602,930) rotate(-45)">2025-11-05</text>
<text class="t" text-anchor="end" transform="translate(1648.500,930) rotate(-45)">2025-12-03</text>
<text class="t" text-anchor="end" transform="translate(1695.100,930) rotate(-45)">2025-12-31</text>
<text class="t" text-anchor="end" transform="translate(1741.600,930) rotate(-45)">2026-01-28</text>
<text class="t" text-anchor="end" transform="translate(1788.200,930) rotate(-45)">2026-02-25</text>
</g>
<rect x="1626.500" y="491.500" width="147.500" height="77.500" fill="#eee" stroke="#555" stroke-width="1.400"/>
<path d="M1639 505.700h38.500" stroke="#004586" stroke-width="4"/><path d="M1639 530h38.500" stroke="#ff420e" stroke-width="4"/><path d="M1639 554.300h38.500" stroke="#ffd320" stroke-width="4"/>
<text class="t" x="1682.500" y="511.500">Sum</text><text class="t" x="1682.500" y="536">Correction</text><text class="t" x="1682.500" y="560">Limit</text>

<!-- bottom bands (over sheet) -->
<rect x="0" y="1070" width="1861" height="54" fill="#eff0f2"/>
<path d="M0 1070.500h1839" stroke="#c9cacb" stroke-width="1"/>
<rect x="1839" y="250" width="22" height="820" fill="#eff0f2"/>
<path d="M1839.500 284v786" stroke="#dcdddf" stroke-width="1"/>
<rect x="1847" y="256" width="7" height="808" rx="3.500" fill="#dcdee0"/>
<rect x="1847" y="256" width="7" height="19" rx="3.500" fill="#b9bbbc"/>
<rect x="6" y="1077" width="1825" height="8" rx="4" fill="#dcdee0"/>
<rect x="6" y="1077" width="862" height="8" rx="4" fill="#c4c6c7" stroke="#a9abac" stroke-width="1"/>
<rect x="1832" y="1070" width="7" height="21" fill="#a6a8a9"/><path d="M1835.500 1076v10" stroke="#111" stroke-width="1"/>

<!-- tabs -->
<path d="M0 1124.500h1920" stroke="#a9abac" stroke-width="1.400"/>
<rect x="1081" y="1091" width="82" height="33" fill="#fff"/><rect x="1081" y="1121" width="82" height="3" fill="#232629"/>
<path d="M28 1096v24l-10-12zM61 1096v24l-12-12zM82 1096v24l12-12zM115 1096v24l11-12z" fill="#232629" stroke="none"/>
<path d="M16.500 1095v26M127.500 1095v26" stroke="#232629" stroke-width="1"/>
<path d="M147 1108h26M160 1096v25" stroke="#232629" stroke-width="4.500"/>
<path class="sp" d="M298.500 1096v22M434.500 1096v22M553.500 1096v22M692.500 1096v22M809.500 1096v22M947.500 1096v22M1080.500 1096v22"/>
<text class="u" style="font-size:22px" x="206" y="1115" textLength="69" lengthAdjust="spacingAndGlyphs">spitfire</text>
<text class="u" style="font-size:22px" x="323" y="1115" textLength="87" lengthAdjust="spacingAndGlyphs">spitfire-p</text>
<text class="u" style="font-size:22px" x="459" y="1115" textLength="71" lengthAdjust="spacingAndGlyphs">hotride</text>
<text class="u" style="font-size:22px" x="578" y="1115" textLength="92" lengthAdjust="spacingAndGlyphs">hotride-p</text>
<text class="u" style="font-size:22px" x="716" y="1115" textLength="69" lengthAdjust="spacingAndGlyphs">default</text>
<text class="u" style="font-size:22px" x="833" y="1115" textLength="89" lengthAdjust="spacingAndGlyphs">default-p</text>
<text class="u" style="font-size:22px" x="970" y="1115" textLength="87" lengthAdjust="spacingAndGlyphs">compare</text>
<text class="u" style="font-size:22px;font-weight:bold" x="1102" y="1115" textLength="39" lengthAdjust="spacingAndGlyphs">risk</text>

<!-- status bar -->
<g transform="translate(23,1143)"><path class="n" d="M-12-10h17l6 6v8M-12-10v22h14M-7-10v7h9v-7M-7 12v-6h6"/><rect x="4" y="4" width="6" height="8" fill="#e8506a"/></g>
<text class="u" style="font-size:22px" x="55" y="1151" textLength="115" lengthAdjust="spacingAndGlyphs">Sheet 8 of 8</text>
<text class="u" style="font-size:22px" x="519" y="1151" textLength="70" lengthAdjust="spacingAndGlyphs">Default</text>
<text class="u" style="font-size:22px" x="773" y="1151" textLength="127" lengthAdjust="spacingAndGlyphs">English (USA)</text>
<path d="M1081 1132h9M1085.500 1132v22M1081 1154.500h9" stroke="#232629" stroke-width="1.400" fill="none"/>
<path d="M1094 1150v4h19v-4" stroke="#232629" stroke-width="2" fill="none"/>
<text class="u" style="font-size:22px" x="1234" y="1151" textLength="346" lengthAdjust="spacingAndGlyphs">Count: 1; Sum: 2; Selection count: 1</text>
<path d="M1655 1144h8M1670 1144h167M1752 1139v10M1841 1144h10M1846 1139v10" stroke="#232629" stroke-width="1.400"/>
<circle cx="1728" cy="1144" r="5" fill="#eff0f2" stroke="#232629" stroke-width="1.400"/>
<text class="u" style="font-size:22px" x="1867" y="1151" textLength="41" lengthAdjust="spacingAndGlyphs">75%</text>
<path d="M0 1159.500h1920" stroke="#dadbdc" stroke-width="1"/>

<!-- taskbar -->
<rect x="50" y="1163" width="54" height="34" fill="#4a8fb5"/><rect x="50" y="1195" width="54" height="2" fill="#3daee9"/>
<rect x="104" y="1163" width="55" height="34" fill="#d9dadc"/>
<circle cx="14" cy="1180" r="2" fill="#232629"/><path d="M24 1172l8 8-8 7" fill="none" stroke="#232629" stroke-width="3"/><circle cx="21" cy="1168" r="1.600" fill="#232629"/><circle cx="21" cy="1190" r="3" fill="#232629"/>
<rect x="180" y="1170" width="22" height="22" rx="2" fill="#31363b"/><path d="M184 1176h14M184 1186h14" stroke="#fff" stroke-width="1.500"/><rect x="192" y="1173" width="4" height="5" fill="#3daee9"/><rect x="186" y="1183" width="4" height="5" fill="#fff"/>
<path d="M228 1169h11l2 3h9v20h-22z" fill="#3a9cdc"/><path d="M228 1175h22v17h-22z" fill="#5cb8ee"/>
<rect x="264" y="1160" width="46.500" height="40" fill="#cbcdce"/><rect x="264" y="1160" width="46.500" height="3" fill="#a9abac"/>
<rect x="312" y="1160" width="46" height="40" fill="#cbcdce"/><rect x="312" y="1160" width="46" height="3" fill="#a9abac"/>
<rect x="360" y="1160" width="46" height="40" fill="#a3d2ee"/><rect x="360" y="1160" width="46" height="3" fill="#3daee9"/>
<circle cx="287" cy="1181" r="11.500" fill="#f0612a"/><path d="M280 1176c2-6 6-8 8-11 3 3 5 6 5 10z" fill="#ffbe2e"/><circle cx="286" cy="1181" r="5.500" fill="#6a34c8"/>
<rect x="325" y="1170" width="21" height="21" rx="2" fill="#4d5256"/><path d="M333 1174l4 6-4 6" fill="none" stroke="#aaa" stroke-width="1.200"/>
<path d="M375 1168h12l4 5v19h-16z" fill="#2fbf7c"/><path d="M378 1176h10v12h-10zM378 1180h10M378 1184h10M383 1176v12" fill="none" stroke="#a7e3c4" stroke-width=".8"/>
<g transform="translate(1253,1180)"><path class="f" d="M-2-13h4l8 24h3v2h-26v-2h3z"/><path d="M-5-3h10M-7 4h14" stroke="#eff0f2" stroke-width="3"/></g>
<g transform="translate(1303,1180)"><path fill="none" stroke="#444" stroke-width="1.400" d="M-10-9h20v22h-20z"/><path class="f" d="M-4-13h8v6h-8z"/><path d="M-6-3h12M-6 1h12M-6 5h12M-6 9h7" stroke="#333" stroke-width="1.400"/></g>
<g transform="translate(1352,1180)"><ellipse cx="0" cy="0" rx="11.500" ry="12.500" class="s" stroke-width="1.500"/><path class="f" d="M-3-5l7 5-7 5z"/></g>
<g transform="translate(1401,1180)"><path class="f" d="M-12-5h6l6-8v26l-6-8h-6z"/><path d="M4-7c3 4 3 10 0 14M8-10c4 6 4 14 0 20" fill="none" stroke="#232629" stroke-width="1.300"/></g>
<g transform="translate(1449,1180)"><rect x="-13" y="-9" width="26" height="18" fill="none" stroke="#232629" stroke-width="1.500"/><rect x="-13" y="-9" width="16" height="18" fill="#232629"/></g>
<g transform="translate(1498,1180)"><rect x="-11" y="-12" width="22" height="19" fill="none" stroke="#232629" stroke-width="1.500"/><path class="f" d="M-11-12L11 7H11v3h-22V-12zM-2 9h4v3h-4zM-6 12h12v2h-12z"/><path d="M0-12H11V-2z" fill="#eff0f2"/></g>
<text class="u" style="font-size:30px" x="1534" y="1190" textLength="29" lengthAdjust="spacingAndGlyphs">us</text>
<g transform="translate(1597,1180)" fill="none"><path stroke="#bbb" stroke-width="1.400" d="M-16-6c9-9 23-9 32 0"/><path stroke="#232629" stroke-width="1.400" d="M-11-1c6-7 16-7 22 0M-6 4c3-4 9-4 12 0"/><circle cx="-1" cy="10" r="2.500" stroke="#232629" stroke-width="1.400"/><path class="f" d="M5 6h11v8H5z"/><path stroke="#232629" stroke-width="1.400" d="M7 6V4c0-4 7-4 7 0v2"/></g>
<path d="M1632 1184l9.500-10 9.500 10" fill="none" stroke="#232629" stroke-width="1.400"/>
<text class="u" x="1670" y="1189" textLength="195" lengthAdjust="spacingAndGlyphs" style="white-space:pre" xml:space="preserve">2025-09-05  19:01</text>
<rect x="1886" y="1168" width="23" height="24" rx="1" fill="none" stroke="#232629" stroke-width="1.400"/><path d="M1886 1188h23" stroke="#232629" stroke-width="2"/>
</svg>
</body></html>
